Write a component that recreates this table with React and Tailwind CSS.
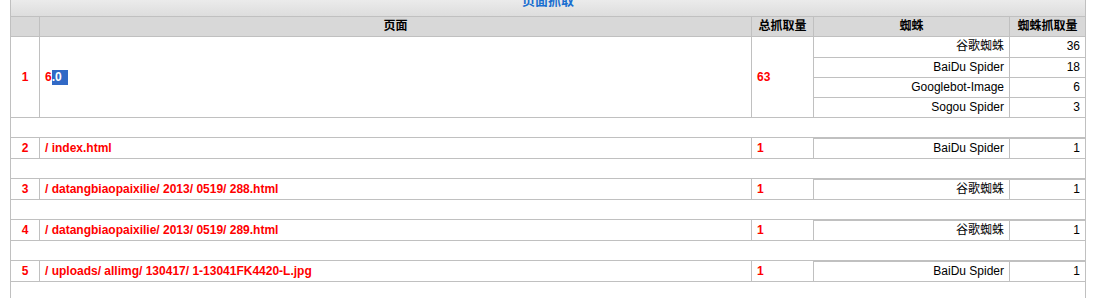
const spiders = [
  { name: '谷歌蜘蛛', count: 36 },
  { name: 'BaiDu Spider', count: 18 },
  { name: 'Googlebot-Image', count: 6 },
  { name: 'Sogou Spider', count: 3 },
];

const rows = [
  { id: 2, page: '/ index.html', total: 1, spider: 'BaiDu Spider', count: 1 },
  { id: 3, page: '/ datangbiaopaixilie/ 2013/ 0519/ 288.html', total: 1, spider: '谷歌蜘蛛', count: 1 },
  { id: 4, page: '/ datangbiaopaixilie/ 2013/ 0519/ 289.html', total: 1, spider: '谷歌蜘蛛', count: 1 },
  { id: 5, page: '/ uploads/ allimg/ 130417/ 1-13041FK4420-L.jpg', total: 1, spider: 'BaiDu Spider', count: 1 },
];

const font = { fontFamily: '"Liberation Sans", "Noto Sans CJK SC", sans-serif' };

const BlankRow = () => <div className="h-[20px] border-b border-[#c0c0c0]" />;

const App = () => {
  return (
    <div className="h-[298px] w-[1107px] overflow-hidden bg-white text-[12px]" style={font}>
      <div className="ml-[10px] w-[1076px] border-x border-[#c0c0c0]">
        {/* title bar, scrolled partly off the top */}
        <div className="-mt-[10px] h-[27px] border-b border-[#c0c0c0] bg-gradient-to-b from-[#f4f4f4] to-[#dddddd] text-center text-[13px] font-bold leading-[22px] text-[#1a6fd0]">
          页面抓取
        </div>

        {/* header */}
        <div className="flex h-[20px] border-b border-[#c0c0c0] bg-[#d8d8d8] font-bold leading-[19px] text-black">
          <div className="w-[28px]" />
          <div className="w-[712px] border-l border-[#c0c0c0] text-center">页面</div>
          <div className="w-[62px] border-l border-[#c0c0c0] text-center">总抓取量</div>
          <div className="w-[196px] border-l border-[#c0c0c0] text-center">蜘蛛</div>
          <div className="w-[76px] border-l border-[#c0c0c0] text-center">蜘蛛抓取量</div>
        </div>

        {/* row 1 */}
        <div className="flex h-[81px] border-b border-[#c0c0c0]">
          <div className="flex w-[28px] items-center justify-center font-bold text-[#ff0000]">1</div>
          <div className="flex w-[712px] items-center border-l border-[#c0c0c0] pl-[5px] font-bold text-[#ff0000]">
            <span className="leading-[15px]">6</span>
            <span className="bg-[#3169c6] pr-[6px] leading-[15px] text-white">.0</span>
          </div>
          <div className="flex w-[62px] items-center border-l border-[#c0c0c0] pl-[5px] font-bold text-[#ff0000]">63</div>
          <div className="flex w-[272px] flex-col">
            {spiders.map((s, i) => (
              <div key={s.name} className={`flex h-[20px] ${i > 0 ? 'border-t border-[#c0c0c0]' : ''}`}>
                <div className="w-[196px] border-l border-[#c0c0c0] pr-[5px] text-right leading-[19px] text-black">{s.name}</div>
                <div className="w-[76px] border-l border-[#c0c0c0] pr-[5px] text-right leading-[19px] text-black">{s.count}</div>
              </div>
            ))}
          </div>
        </div>
        <BlankRow />

        {rows.map((r) => (
          <div key={r.id}>
            <div className="flex h-[21px] border-b border-[#c0c0c0] leading-[20px]">
              <div className="w-[28px] text-center font-bold text-[#ff0000]">{r.id}</div>
              <div className="w-[712px] border-l border-[#c0c0c0] pl-[5px] font-bold text-[#ff0000]">{r.page}</div>
              <div className="w-[62px] border-l border-[#c0c0c0] pl-[5px] font-bold text-[#ff0000]">{r.total}</div>
              <div className="flex w-[272px] border-t border-[#c0c0c0]">
                <div className="w-[196px] border-l border-[#c0c0c0] pr-[5px] text-right leading-[19px] text-black">{r.spider}</div>
                <div className="w-[76px] border-l border-[#c0c0c0] pr-[5px] text-right leading-[19px] text-black">{r.count}</div>
              </div>
            </div>
            <BlankRow />
          </div>
        ))}
      </div>
    </div>
  );
};

export default App;
